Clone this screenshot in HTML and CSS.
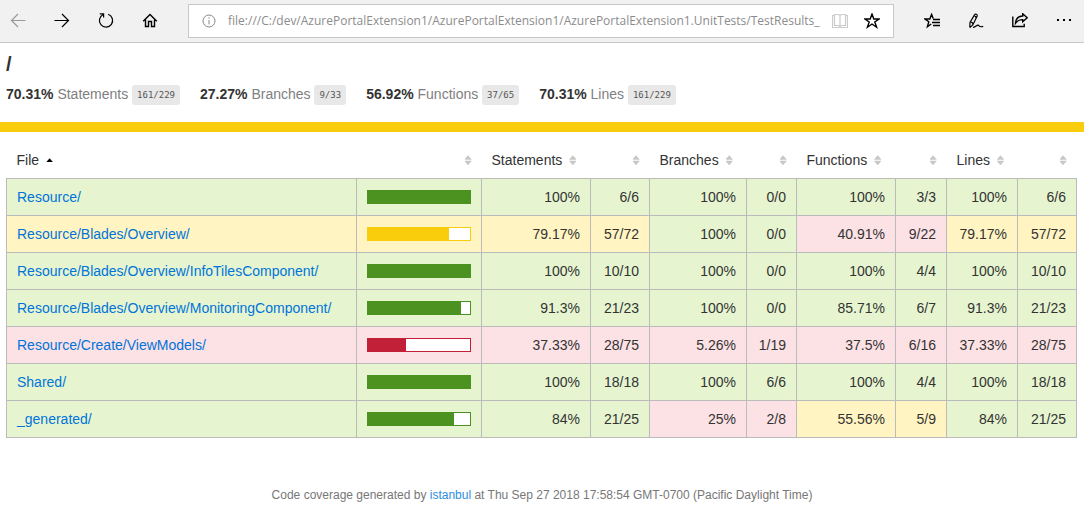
FILE: index.html
```html
<!DOCTYPE html>
<html lang="en">
<head>
<meta charset="utf-8">
<meta name="viewport" content="width=device-width, initial-scale=1">
<title>Code coverage report for /</title>
<link rel="stylesheet" href="styles.css">
</head>
<body>
<header class="toolbar">
  <nav class="nav-buttons" aria-label="Navigation">
    <button class="tool disabled" type="button" aria-label="Back" disabled><svg viewBox="0 0 16 16"><path d="M15.5 7.5H1.5M8 1L1.5 7.5L8 14"/></svg></button>
    <button class="tool" type="button" aria-label="Forward"><svg viewBox="0 0 16 16"><path d="M.5 7.5H14.5M8 1L14.5 7.5L8 14"/></svg></button>
    <button class="tool" type="button" aria-label="Refresh"><svg viewBox="0 0 16 16"><path d="M10.2 1.3A6.6 6.6 0 1 1 5.3 1.5M1.8 .8H5.6V4.5"/></svg></button>
    <button class="tool" type="button" aria-label="Home"><svg viewBox="0 0 16 16"><path stroke-width="1.4" d="M1.2 8.2L8 1.5L14.8 8.2M3.5 6.5V13.5H6.5V8.5H9.5V13.5H12.5V6.5"/></svg></button>
  </nav>
  <div class="address">
    <svg class="info" viewBox="0 0 14 14"><circle cx="7" cy="7" r="6"/><path d="M7 6V10.4M7 3.4V4.8"/></svg>
    <input class="url" type="text" aria-label="Address" value="file:///C:/dev/AzurePortalExtension1/AzurePortalExtension1/AzurePortalExtension1.UnitTests/TestResults_">
    <button class="tool reading" type="button" aria-label="Reading view" disabled><svg viewBox="0 0 16 16"><path d="M.5 2.5H2.5V1.5H6.5L8 2.5L9.5 1.5H13.5V2.5H15.5V14.5H.5ZM2.5 2.5V12.5H6.5L8 13.5L9.5 12.5H13.5V2.5M8 2.5V13.5"/></svg></button>
    <button class="tool" type="button" aria-label="Add to favorites"><svg viewBox="0 0 16 16"><path stroke-width="1.4" d="M8 1L9.8 6H15L10.8 9L12.6 14.2L8 11L3.4 14.2L5.2 9L1 6H6.2Z"/></svg></button>
  </div>
  <div class="actions">
    <button class="tool" type="button" aria-label="Favorites"><svg viewBox="0 0 16 16"><path stroke-width="1.4" d="M9.2 5.6L7.6 1.4L5.8 6H1L4.8 8.8L3.4 13.8L7.2 11M9 6.5H16M8 9.5H16M9 12.5H16"/></svg></button>
    <button class="tool" type="button" aria-label="Add notes"><svg viewBox="0 0 16 16"><path d="M1.8 14.6L2 9.5L6.6 1.6C7.6.6 9.6 1.4 9.2 3L4.8 12L1.8 14.6M6.6 3.5C7.8 3 8.2 4 7.9 5.5M3 9.5C4.2 9.2 5.2 10 4.8 12M5 14.3C7.5 14.6 8.5 12 10 12.2C11.5 12.4 11 14.8 15.2 13.4"/></svg></button>
    <button class="tool" type="button" aria-label="Share"><svg viewBox="0 0 16 16"><path stroke-width="1.4" d="M.8 3.5V13.5H12.2V10.8M10.7 .8L15.2 4.8L10.7 8.8V6.6C7.7 6.4 5.5 7.6 3.5 10.2C3.8 6 6 3.2 10.7 3Z"/></svg></button>
    <button class="tool more" type="button" aria-label="Settings and more"><svg viewBox="0 0 16 16"><path d="M1 6H3V8H1ZM7 6H9V8H7ZM13 6H15V8H13Z"/></svg></button>
  </div>
</header>
<main>
  <section class="summary">
    <h1>/</h1>
    <div class="metrics">
      <div><strong>70.31%</strong> <span class="quiet">Statements</span> <span class="fraction">161/229</span></div>
      <div><strong>27.27%</strong> <span class="quiet">Branches</span> <span class="fraction">9/33</span></div>
      <div><strong>56.92%</strong> <span class="quiet">Functions</span> <span class="fraction">37/65</span></div>
      <div><strong>70.31%</strong> <span class="quiet">Lines</span> <span class="fraction">161/229</span></div>
    </div>
  </section>
  <div class="status-line"></div>
  <div class="report">
    <table class="coverage">
      <colgroup><col class="c-file"><col class="c-pic"><col class="c-st"><col class="c-raw"><col class="c-br"><col class="c-braw"><col class="c-fn"><col class="c-fraw"><col class="c-ln"><col class="c-raw"></colgroup>
      <thead>
        <tr>
          <th scope="col">File<i class="sorter asc"></i></th>
          <th class="num" scope="col" aria-label="Chart"><i class="sorter"></i></th>
          <th scope="col">Statements<i class="sorter"></i></th>
          <th class="num" scope="col" aria-label="Statements covered"><i class="sorter"></i></th>
          <th scope="col">Branches<i class="sorter"></i></th>
          <th class="num" scope="col" aria-label="Branches covered"><i class="sorter"></i></th>
          <th scope="col">Functions<i class="sorter"></i></th>
          <th class="num" scope="col" aria-label="Functions covered"><i class="sorter"></i></th>
          <th scope="col">Lines<i class="sorter"></i></th>
          <th class="num" scope="col" aria-label="Lines covered"><i class="sorter"></i></th>
        </tr>
      </thead>
      <tbody>
        <tr class="high"><td><a href="#">Resource/</a></td><td><div class="chart"><div class="fill" style="width:100%"></div></div></td><td class="num">100%</td><td class="num">6/6</td><td class="num">100%</td><td class="num">0/0</td><td class="num">100%</td><td class="num">3/3</td><td class="num">100%</td><td class="num">6/6</td></tr>
        <tr class="medium"><td><a href="#">Resource/Blades/Overview/</a></td><td><div class="chart"><div class="fill" style="width:79%"></div></div></td><td class="num">79.17%</td><td class="num">57/72</td><td class="num high">100%</td><td class="num high">0/0</td><td class="num low">40.91%</td><td class="num low">9/22</td><td class="num">79.17%</td><td class="num">57/72</td></tr>
        <tr class="high"><td><a href="#">Resource/Blades/Overview/InfoTilesComponent/</a></td><td><div class="chart"><div class="fill" style="width:100%"></div></div></td><td class="num">100%</td><td class="num">10/10</td><td class="num">100%</td><td class="num">0/0</td><td class="num">100%</td><td class="num">4/4</td><td class="num">100%</td><td class="num">10/10</td></tr>
        <tr class="high"><td><a href="#">Resource/Blades/Overview/MonitoringComponent/</a></td><td><div class="chart"><div class="fill" style="width:91%"></div></div></td><td class="num">91.3%</td><td class="num">21/23</td><td class="num">100%</td><td class="num">0/0</td><td class="num">85.71%</td><td class="num">6/7</td><td class="num">91.3%</td><td class="num">21/23</td></tr>
        <tr class="low"><td><a href="#">Resource/Create/ViewModels/</a></td><td><div class="chart"><div class="fill" style="width:37%"></div></div></td><td class="num">37.33%</td><td class="num">28/75</td><td class="num">5.26%</td><td class="num">1/19</td><td class="num">37.5%</td><td class="num">6/16</td><td class="num">37.33%</td><td class="num">28/75</td></tr>
        <tr class="high"><td><a href="#">Shared/</a></td><td><div class="chart"><div class="fill" style="width:100%"></div></div></td><td class="num">100%</td><td class="num">18/18</td><td class="num">100%</td><td class="num">6/6</td><td class="num">100%</td><td class="num">4/4</td><td class="num">100%</td><td class="num">18/18</td></tr>
        <tr class="high"><td><a href="#">_generated/</a></td><td><div class="chart"><div class="fill" style="width:84%"></div></div></td><td class="num">84%</td><td class="num">21/25</td><td class="num low">25%</td><td class="num low">2/8</td><td class="num medium">55.56%</td><td class="num medium">5/9</td><td class="num">84%</td><td class="num">21/25</td></tr>
      </tbody>
    </table>
  </div>
</main>
<footer>Code coverage generated by <a href="#">istanbul</a> at Thu Sep 27 2018 17:58:54 GMT-0700 (Pacific Daylight Time)</footer>
</body>
</html>
```
FILE: styles.css
```css
* { box-sizing: border-box; }
body {
  margin: 0;
  background: #fff;
  color: #333;
  font: 14px/20px "Liberation Sans", Arial, sans-serif;
}
a { color: #0074d9; text-decoration: none; }

.toolbar {
  display: flex;
  align-items: center;
  height: 43px;
  padding: 0 10px;
  background: #f1f1f1;
  border-bottom: 1px solid #c8c8c8;
}
.nav-buttons, .actions { display: flex; gap: 28px; }
.tool {
  display: block;
  flex: none;
  width: 16px;
  height: 16px;
  padding: 0;
  border: 0;
  background: none;
  color: #000;
}
.tool svg { display: block; width: 16px; height: 16px; fill: none; stroke: currentColor; stroke-width: 1.2; }
.tool.disabled { color: #999; }
.tool.reading { color: #ccc; }
.tool.more svg { fill: currentColor; stroke: none; }
.address {
  display: flex;
  flex: 1;
  align-items: center;
  gap: 16px;
  min-width: 0;
  height: 34px;
  margin: 0 30px;
  padding: 0 13px;
  background: #fff;
  border: 1px solid #c8c8c8;
}
.info { flex: none; width: 14px; height: 14px; margin-right: -4px; fill: none; stroke: #888; }
.url {
  flex: 1;
  min-width: 0;
  margin-right: -6px;
  padding: 0;
  border: 0;
  outline: 0;
  color: #8c8c8c;
  font: 12px/20px "Open Sans", "Noto Sans", sans-serif;
}
.actions { margin-right: 2px; }

.summary { padding: 10px 6px 17px; }
h1 { margin: 0; font-size: 20px; line-height: 22px; }
.metrics { display: flex; flex-wrap: wrap; gap: 20px; padding-top: 9px; }
.quiet { color: #808080; }
.fraction {
  display: inline-block;
  padding: 0 5px;
  background: #e8e8e8;
  border-radius: 3px;
  color: #555;
  font: 9px/20px "DejaVu Sans Mono", monospace;
  vertical-align: middle;
}
.status-line { height: 10px; background: #f9cd0b; }

.report { padding: 10px 7px 10px 6px; }
.coverage { width: 100%; table-layout: fixed; border-collapse: collapse; }
.c-file { width: 350px; }
.c-pic { width: 125px; }
.c-st { width: 109px; }
.c-raw { width: 59px; }
.c-br { width: 97px; }
.c-braw { width: 50px; }
.c-fn { width: 99px; }
.c-fraw { width: 51px; }
.c-ln { width: 71px; }
th, td { padding: 8px 10px; text-align: left; white-space: nowrap; }
th { height: 36px; font-weight: normal; }
td { height: 37px; border: 1px solid #bbb; }
.num { text-align: right; }
.high { background: #e6f5d0; }
.medium { background: #fff4c2; }
.low { background: #fce1e5; }
.sorter {
  display: inline-block;
  width: 7px;
  height: 10px;
  margin-left: 7px;
  background: #c8c8c8;
  clip-path: polygon(50% 0, 100% 40%, 100% 45%, 0 45%, 0 40%, 50% 0, 0 60%, 0 55%, 100% 55%, 100% 60%, 50% 100%, 0 60%);
  vertical-align: 0;
}
.sorter.asc {
  height: 4px;
  background: #000;
  clip-path: polygon(50% 0, 100% 100%, 0 100%);
  vertical-align: 3px;
}
.chart { width: 100%; height: 14px; background: #fff; border: 1px solid #4b9221; }
.fill { height: 12px; background: #4b9221; }
.medium .chart { border-color: #f9cd0b; }
.medium .fill { background: #f9cd0b; }
.low .chart { border-color: #c21f39; }
.low .fill { background: #c21f39; }

footer {
  padding: 37px 10px 5px;
  color: #777;
  font-size: 12px;
  text-align: center;
}
footer a { color: #2b8ee0; }
```
